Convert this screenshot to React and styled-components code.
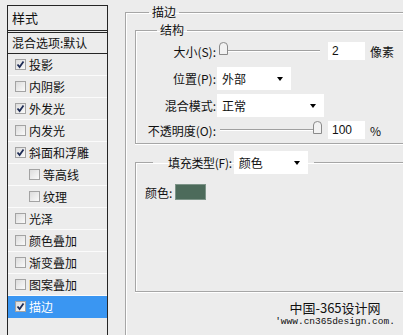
import React from 'react';
import styled, { createGlobalStyle } from 'styled-components';

const GlobalStyle = createGlobalStyle`
  html, body {
    margin: 0;
    padding: 0;
    background: #ececec;
    overflow: hidden;
  }
  body {
    font-family: "Noto Sans CJK SC", "Liberation Sans", sans-serif;
    font-size: 12px;
    color: #111;
  }
`;

const styleRows = [
	{ name: '投影', checked: true },
	{ name: '内阴影', checked: false },
	{ name: '外发光', checked: true },
	{ name: '内发光', checked: false },
	{ name: '斜面和浮雕', checked: true },
	{ name: '等高线', checked: false, indent: true },
	{ name: '纹理', checked: false, indent: true },
	{ name: '光泽', checked: false },
	{ name: '颜色叠加', checked: false },
	{ name: '渐变叠加', checked: false },
	{ name: '图案叠加', checked: false },
	{ name: '描边', checked: true, active: true }
];

function Check({ checked }) {
	return (
		<Box>
			{checked && (
				<svg width="9" height="9" viewBox="0 0 9 9">
					<path d="M1.5 4.5 L3.6 7 L7.5 1.5" fill="none" stroke="#1d2b55" strokeWidth="1.8" />
				</svg>
			)}
		</Box>
	);
}

function Thumb() {
	return (
		<svg width="9" height="13" viewBox="0 0 9 13">
			<path d="M0.5 12.5 V4 Q0.5 0.5 4.5 0.5 Q8.5 0.5 8.5 4 V12.5 Z" fill="#f2f2f2" stroke="#8a8a8a" />
		</svg>
	);
}

function Slider({ value }) {
	return (
		<Track>
			<ThumbWrap style={{ left: `${value * 96 - 3}px` }}>
				<Thumb />
			</ThumbWrap>
		</Track>
	);
}

export default function App() {
	return (
		<Page>
			<GlobalStyle />
			<StylesPanel>
				<PanelHeader>样式</PanelHeader>
				<BlendRow>混合选项:默认</BlendRow>
				{styleRows.map((row) => (
					<StyleRow key={row.name} $active={row.active} $indent={row.indent}>
						<Check checked={row.checked} />
						<span>{row.name}</span>
					</StyleRow>
				))}
			</StylesPanel>

			<Settings>
				<Group>
					<Legend>描边</Legend>
					<SubGroup>
						<SubLegend>结构</SubLegend>
						<FormGrid>
							<Label>大小(S):</Label>
							<Control>
								<Slider value={0.02} />
								<NumberBox>2</NumberBox>
								<Unit>像素</Unit>
							</Control>

							<Label>位置(P):</Label>
							<Control>
								<Select $width={74}>外部</Select>
							</Control>

							<Label>混合模式:</Label>
							<Control>
								<Select $width={107}>正常</Select>
							</Control>

							<Label>不透明度(O):</Label>
							<Control>
								<Slider value={1} />
								<NumberBox>100</NumberBox>
								<Unit>%</Unit>
							</Control>
						</FormGrid>
					</SubGroup>

					<FillGroup>
						<FillLegend>
							<FillLabel>填充类型(F):</FillLabel>
							<Select $width={74}>颜色</Select>
						</FillLegend>
						<ColorRow>
							<span>颜色:</span>
							<Swatch />
						</ColorRow>
					</FillGroup>

					<Watermark>
						<WatermarkTitle>中国-365设计网</WatermarkTitle>
						<WatermarkUrl>'www.cn365design.com.</WatermarkUrl>
					</Watermark>
				</Group>
			</Settings>
		</Page>
	);
}

const Page = styled.div`
  display: flex;
  align-items: flex-start;
  box-sizing: border-box;
  padding: 5px 0 0 7px;
  height: 335px;
  width: 100%;
  overflow: hidden;
`;

const StylesPanel = styled.div`
  width: 99px;
  height: 340px;
  border: 1px solid #262626;
  flex-shrink: 0;
`;

const PanelHeader = styled.div`
  height: 24px;
  line-height: 24px;
  padding-left: 4px;
  font-size: 13px;
  border-bottom: 3px double #262626;
`;

const BlendRow = styled.div`
  height: 20px;
  line-height: 20px;
  padding-left: 4px;
  border-bottom: 1px solid #262626;
  white-space: nowrap;
`;

const StyleRow = styled.div`
  display: flex;
  align-items: center;
  gap: 3px;
  height: 21px;
  padding-left: ${(p) => (p.$indent ? 21 : 7)}px;
  border-bottom: 1px solid ${(p) => (p.$active ? '#3a96f2' : '#fbfbfb')};
  background: ${(p) => (p.$active ? '#3a96f2' : 'transparent')};
  color: ${(p) => (p.$active ? '#fff' : '#111')};
  white-space: nowrap;
`;

const Box = styled.span`
  display: flex;
  align-items: center;
  justify-content: center;
  width: 9px;
  height: 9px;
  border: 1px solid #a3a3a3;
  background: linear-gradient(135deg, #dcdcdc, #fafafa);
`;

const Settings = styled.div`
  margin-left: 17px;
  flex: 1;
  min-width: 0;
`;

const Group = styled.fieldset`
  margin: 0;
  padding: 4px 0 0 9px;
  height: 340px;
  min-width: 0;
  border: none;
  border-top: 1px solid #a6a6a6;
  border-left: 1px solid #a6a6a6;
  box-shadow: inset 1px 1px 0 #fff;
`;

const Legend = styled.legend`
  margin-left: 14px;
  padding: 0 3px;
  line-height: 14px;
`;

const SubGroup = styled.fieldset`
  margin: 0;
  padding: 2px 0 3px 8px;
  min-width: 0;
  border: 1px solid #a6a6a6;
  border-right: none;
  box-shadow: inset 1px 1px 0 #fff, 0 1px 0 #fff;
`;

const SubLegend = styled.legend`
  margin-left: 13px;
  padding: 0 3px;
  line-height: 14px;
`;

const FormGrid = styled.div`
  display: grid;
  grid-template-columns: 72px 1fr;
  grid-template-rows: 24px 24px 24px 20px;
  row-gap: 3px;
  column-gap: 1px;
`;

const Label = styled.div`
  display: flex;
  align-items: center;
  justify-content: flex-end;
  white-space: nowrap;
`;

const Control = styled.div`
  display: flex;
  align-items: center;
`;

const Track = styled.div`
  position: relative;
  width: 100px;
  height: 1px;
  margin-left: 3px;
  background: #a0a0a0;
  border-bottom: 1px solid #fff;
`;

const ThumbWrap = styled.div`
  position: absolute;
  top: -8px;
  display: flex;
`;

const NumberBox = styled.div`
  width: 33px;
  height: 18px;
  margin-left: 8px;
  padding-left: 4px;
  line-height: 18px;
  background: #fff;
  font-family: "Liberation Sans", Arial, sans-serif;
`;

const Unit = styled.span`
  margin-left: 5px;
  font-size: 12px;
`;

const Select = styled.div`
  position: relative;
  width: ${(p) => p.$width}px;
  height: 23px;
  line-height: 23px;
  padding-left: 5px;
  box-sizing: border-box;
  background: #fff;
  &::after {
    content: '';
    position: absolute;
    right: 8px;
    top: 10px;
    border-left: 3.5px solid transparent;
    border-right: 3.5px solid transparent;
    border-top: 4px solid #000;
  }
`;

const FillGroup = styled.fieldset`
  margin: 7px 0 0;
  padding: 10px 0 91px 9px;
  min-width: 0;
  border: 1px solid #a6a6a6;
  border-right: none;
  box-shadow: inset 1px 1px 0 #fff, 0 1px 0 #fff;
`;

const FillLegend = styled.legend`
  display: flex;
  align-items: center;
  gap: 2px;
  margin-left: 8px;
  padding: 0 6px 0 15px;
`;

const FillLabel = styled.span`
  letter-spacing: -0.3px;
`;

const ColorRow = styled.div`
  display: flex;
  align-items: center;
  gap: 3px;
  height: 16px;
`;

const Swatch = styled.div`
  width: 29px;
  height: 14px;
  background: #4d6b5b;
  border: 1px solid #7d9488;
`;

const Watermark = styled.div`
  width: 140px;
  margin: 8px 0 0 130px;
  text-align: center;
`;

const WatermarkTitle = styled.div`
  font-size: 13px;
  line-height: 15px;
  font-family: "Noto Sans CJK SC", sans-serif;
`;

const WatermarkUrl = styled.div`
  font-size: 9.5px;
  line-height: 13px;
  font-family: "Liberation Mono", monospace;
  white-space: nowrap;
`;
